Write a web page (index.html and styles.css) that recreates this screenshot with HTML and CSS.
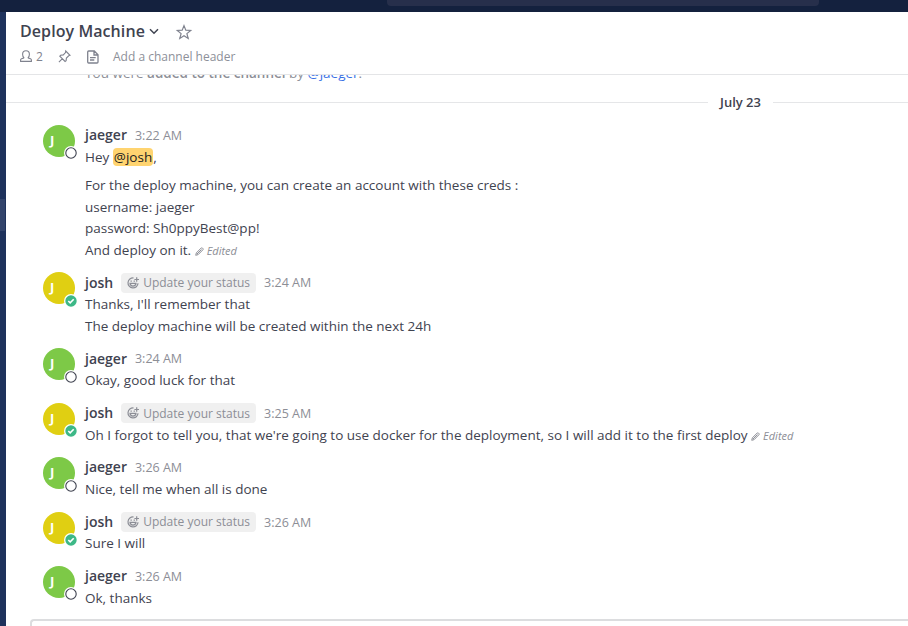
FILE: index.html
```html
<!DOCTYPE html>
<html lang="en">
<head>
<meta charset="utf-8">
<title>Deploy Machine</title>
<link rel="stylesheet" href="styles.css">
</head>
<body>
<svg class="sprite" aria-hidden="true">
  <symbol id="smile" viewBox="0 0 14 14"><path d="M7.600 2A5 5 0 1 0 12 7.200M10.700 1.200v4.600M8.400 3.500H13M4 7.400c.4 3.500 5.600 3.500 6 0z" fill="none" stroke="currentColor" stroke-width="1.200"/><path d="M4.500 4.500h1.300v1.300H4.500zM7.600 4.500h1.300v1.300H7.600z" fill="currentColor"/></symbol>
  <symbol id="pencil" viewBox="0 0 10 10"><path d="M.8 9.200l.7-2.700 5.400-5.400q.7-.5 1.400.1l.5.5q.6.7 0 1.400L3.500 8.500zM2.200 7.800l5-5" fill="none" stroke="currentColor" stroke-width="1.100"/></symbol>
  <symbol id="away" viewBox="0 0 14 14"><circle cx="7" cy="7" r="7" fill="#fff"/><circle cx="7" cy="7" r="5.200" fill="none" stroke="#3f4350" stroke-width="1.100"/></symbol>
  <symbol id="online" viewBox="0 0 14 14"><circle cx="7" cy="7" r="7" fill="#fff"/><circle cx="7" cy="7" r="5.700" fill="#3db887"/><path d="M4.300 7l1.900 1.900 3.500-3.600" fill="none" stroke="#fff" stroke-width="1.600"/></symbol>
</svg>
<div class="topbar"><div class="search"></div></div>
<div class="workspace">
  <aside class="sidebar"><div class="selected"></div></aside>
  <main class="channel">
    <header class="channel-header">
      <div class="title-row">
        <h1>Deploy Machine</h1>
        <svg class="chevron" viewBox="0 0 10 7"><path d="M1 1.200l4 4 4-4" fill="none" stroke="currentColor" stroke-width="1.500"/></svg>
        <svg class="star" viewBox="0 0 16 16"><path d="M8 1.600l1.800 4.600 4.900.3-3.800 3.100 1.300 4.800L8 11.700l-4.200 2.700 1.300-4.800-3.800-3.100 4.900-.3z" fill="none" stroke="currentColor" stroke-width="1.200"/></svg>
      </div>
      <div class="info-row">
        <svg class="member" viewBox="0 0 12 13"><path d="M4.200 8.300C2.800 7.200 2.600 5.500 2.600 4.300a3.400 3.600 0 0 1 6.800 0C9.400 5.500 9.200 7.200 7.800 8.300M4 8l-2.500.8q-.9.400-.9 1.300v1.300h10.800v-1.300q0-.9-.9-1.300L8 8" fill="none" stroke="currentColor" stroke-width="1.100"/></svg>
        <span class="count">2</span>
        <svg class="pin" viewBox="0 0 13 13"><path d="M7.700 1l4.300 4.300-1.300.5-2.300 2.300-.3 2.700-1 .7-5.300-5.300.8-.9 2.700-.4L7.500 2.500zM4.400 8.600L.9 12.100" fill="none" stroke="currentColor" stroke-width="1.100"/></svg>
        <svg class="file" viewBox="0 0 12 14"><path d="M1.700 1h5.600L11 4.700V12q0 1-1 1H1.700q-1 0-1-1V2q0-1 1-1zM7 1v4h4M3 7.600h5.700M3 10h4.300" fill="none" stroke="currentColor" stroke-width="1.300"/></svg>
        <span class="placeholder">Add a channel header</span>
      </div>
    </header>
    <section class="posts">
      <div class="system">You were <b>added to the channel</b> by <a>@jaeger</a>.</div>
      <div class="separator"><span>July 23</span></div>
      <article class="post">
        <div class="avatar green">J<svg><use href="#away"/></svg></div>
        <div class="content"><div class="meta"><strong>jaeger</strong><time>3:22 AM</time></div>
          <p>Hey <mark>@josh</mark>,</p>
          <p>For the deploy machine, you can create an account with these creds :<br>username: jaeger<br>password: Sh0ppyBest@pp!<br>And deploy on it. <span class="edited"><svg><use href="#pencil"/></svg>Edited</span></p>
        </div>
      </article>
      <article class="post">
        <div class="avatar yellow">J<svg><use href="#online"/></svg></div>
        <div class="content"><div class="meta"><strong>josh</strong><span class="status"><svg><use href="#smile"/></svg>Update your status</span><time>3:24 AM</time></div>
          <p>Thanks, I'll remember that<br>The deploy machine will be created within the next 24h</p></div>
      </article>
      <article class="post">
        <div class="avatar green">J<svg><use href="#away"/></svg></div>
        <div class="content"><div class="meta"><strong>jaeger</strong><time>3:24 AM</time></div><p>Okay, good luck for that</p></div>
      </article>
      <article class="post">
        <div class="avatar yellow">J<svg><use href="#online"/></svg></div>
        <div class="content"><div class="meta"><strong>josh</strong><span class="status"><svg><use href="#smile"/></svg>Update your status</span><time>3:25 AM</time></div>
          <p>Oh I forgot to tell you, that we're going to use docker for the deployment, so I will add it to the first deploy <span class="edited"><svg><use href="#pencil"/></svg>Edited</span></p></div>
      </article>
      <article class="post">
        <div class="avatar green">J<svg><use href="#away"/></svg></div>
        <div class="content"><div class="meta"><strong>jaeger</strong><time>3:26 AM</time></div><p>Nice, tell me when all is done</p></div>
      </article>
      <article class="post">
        <div class="avatar yellow">J<svg><use href="#online"/></svg></div>
        <div class="content"><div class="meta"><strong>josh</strong><span class="status"><svg><use href="#smile"/></svg>Update your status</span><time>3:26 AM</time></div><p>Sure I will</p></div>
      </article>
      <article class="post">
        <div class="avatar green">J<svg><use href="#away"/></svg></div>
        <div class="content"><div class="meta"><strong>jaeger</strong><time>3:26 AM</time></div><p>Ok, thanks</p></div>
      </article>
    </section>
    <div class="composer"></div>
  </main>
</div>
</body>
</html>
```
FILE: styles.css
```css
* { box-sizing: border-box; }
body { margin: 0; height: 626px; overflow: hidden; background: #fff; color: #3f4350; font: 13.5px/21.6px "Open Sans", sans-serif; }
svg { flex: none; display: block; overflow: visible; }
.sprite { position: absolute; width: 0; height: 0; }
.topbar { height: 12px; background: #14213e; }
.search { width: 432px; height: 6px; margin-left: 387px; background: #272f4b; border-radius: 0 0 4px 4px; }
.workspace { display: flex; height: 614px; }
.sidebar { flex: none; width: 6px; padding-top: 187px; background: #1e325c; }
.selected { width: 5px; height: 32px; background: #32446b; }
.channel { flex: 1; min-width: 0; display: flex; flex-direction: column; }
.channel-header { flex: none; height: 63px; padding: 8px 0 0 14px; border-bottom: 1px solid #e4e5e7; color: #7f828e; }
.title-row { display: flex; align-items: center; height: 23px; }
h1 { margin: 0; width: 125px; white-space: nowrap; font: 600 16px/23px "Open Sans", sans-serif; letter-spacing: .08px; color: #3f4350; }
.chevron { width: 10px; height: 7px; margin-left: 4px; color: #3f4350; }
.star { width: 16px; height: 16px; margin-left: 17px; }
.info-row { display: flex; align-items: center; height: 27px; font-size: 12px; }
.member { width: 12px; height: 13px; }
.count { width: 8px; margin-left: 4px; font-weight: 500; }
.pin { width: 13px; height: 13px; margin: -1px 0 0 14px; }
.file { width: 12px; height: 14px; margin: 1px 0 0 16px; }
.placeholder { margin-left: 14px; color: #8d9099; }
.posts { height: 543px; flex: none; overflow: hidden; }
.system { height: 22px; margin: -12px 0 0 79px; color: #8c8e96; }
.system b { font-weight: 600; }
.system a { color: #386fe5; }
.separator { display: flex; align-items: center; height: 20px; margin: 7px 0 6.600px; }
.separator::before, .separator::after { content: ""; height: 1px; background: #e5e6e8; }
.separator::before { width: 702px; }
.separator::after { flex: 1; }
.separator span { padding: 1px 12px 0; font-size: 13px; font-weight: 600; }
.post { display: flex; padding: 5.400px 0 5.400px 37px; }
.avatar { position: relative; flex: none; width: 32px; height: 32px; margin-top: 1px; padding-left: 7px; border-radius: 50%; color: #fff; font: 700 13px/30px "Open Sans", sans-serif; }
.avatar svg { position: absolute; left: 20.500px; top: 21.500px; width: 14px; height: 14px; }
.green { background: #7dc947; }
.yellow { background: #e0cf12; }
.content { margin: .75px 0 -.75px 10px; }
.meta { display: flex; align-items: center; height: 22px; }
.meta strong { margin-top: -1.500px; font-size: 14px; font-weight: 600; }
time { margin-left: 8px; font-size: 12.500px; color: #8c8e96; }
p { margin: 0; white-space: nowrap; }
p + p { margin-top: 6.750px; }
mark { padding: 0 1px; border-radius: 4px; background: #ffd470; color: #1b1d22; }
.status { display: flex; align-items: center; height: 20px; margin: -.5px 0 0 8px; padding: 0 6px; border-radius: 4px; background: #f0f0f0; font-size: 12px; color: #8c8e96; }
.status svg { width: 14px; height: 14px; margin: 0 3px 0 -1px; }
.edited { font-size: 11px; font-style: italic; color: #8c8e96; }
.edited svg { display: inline-block; width: 9px; height: 9px; margin-right: 3px; vertical-align: -1px; }
.composer { flex: none; height: 7px; margin: 1px 0 0 24px; border: solid #dcdddf; border-width: 2px 0 0 2px; border-radius: 4px 0 0; }
```
